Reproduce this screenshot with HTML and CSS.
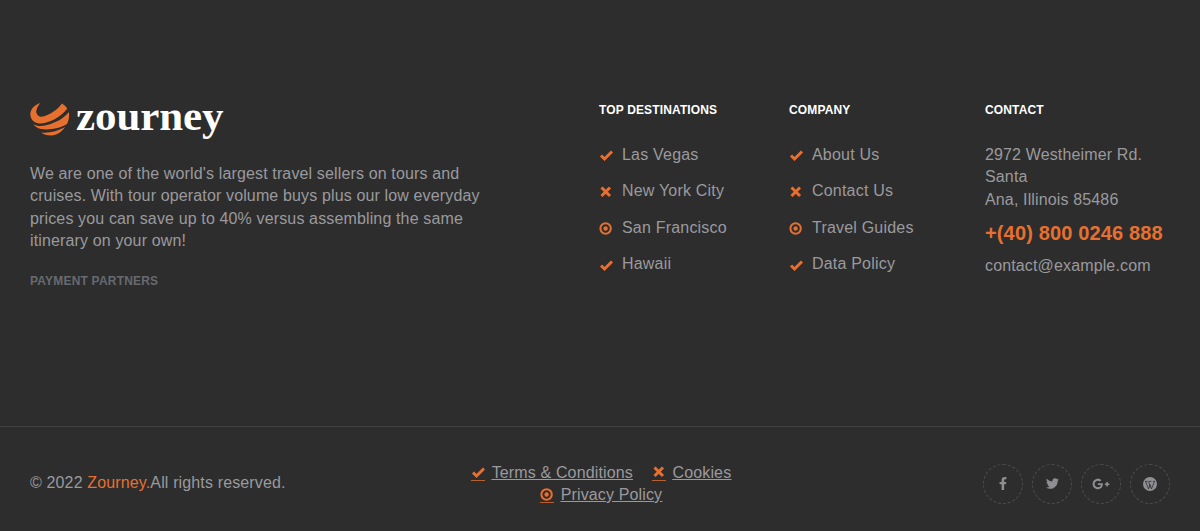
FILE: index.html
```html
<!DOCTYPE html>
<html lang="en">
<head>
<meta charset="utf-8">
<title>Zourney footer</title>
<link rel="stylesheet" href="styles.css">
</head>
<body>
<svg class="defs" width="0" height="0" aria-hidden="true">
  <symbol id="i-check" viewBox="0 0 14 14"><path d="M2 7.500 5.500 11 13 3.500" fill="none" stroke="currentColor" stroke-width="3"/></symbol>
  <symbol id="i-x" viewBox="0 0 14 14"><path d="M2.500 2.500 11 11M11 2.500 2.500 11" fill="none" stroke="currentColor" stroke-width="3"/></symbol>
  <symbol id="i-dot" viewBox="0 0 14 14"><circle cx="6.600" cy="7.500" r="5.200" fill="none" stroke="currentColor" stroke-width="2"/><circle cx="6.600" cy="7.500" r="2.200" fill="currentColor"/></symbol>
</svg>
<footer class="footer">
  <div class="top">
    <section class="about">
      <div class="logo">
        <svg class="logo-mark" viewBox="0 0 40 34" aria-hidden="true">
          <path d="M10 1C5 3 1.500 6 .5 10.500C-.5 16 3 21 9 21.500C18 22 31 15 37 7C37.500 6 35 3.500 32 1.500C28 7 20 13 13 14.500C8 15.500 5.500 11 6.500 8C7 5 9 3 10 1Z" fill="#e8702f"/>
          <path d="M39 10C39.500 15 38.500 19 37 22C30 26 20 28.500 11 27C7 26 5 24.500 3 22C7 24.500 12 24.500 17 23C25 21 33 17 39 10Z" fill="#e8702f"/>
          <path d="M35 25C32 30 27 33 21 33.500C17 33.500 13.500 32.500 11 30.500C19 31.500 28 29 35 25Z" fill="#e8702f"/>
        </svg>
        <span class="logo-text">zourney</span>
      </div>
      <p class="about-text">We are one of the world's largest travel sellers on tours and cruises. With tour operator volume buys plus our low everyday prices you can save up to 40% versus assembling the same itinerary on your own!</p>
      <h5 class="partners">Payment Partners</h5>
    </section>
    <section class="col">
      <h4 class="col-title">Top Destinations</h4>
      <ul class="links">
        <li><svg class="ico"><use href="#i-check"/></svg>Las Vegas</li>
        <li><svg class="ico"><use href="#i-x"/></svg>New York City</li>
        <li><svg class="ico"><use href="#i-dot"/></svg>San Francisco</li>
        <li><svg class="ico"><use href="#i-check"/></svg>Hawaii</li>
      </ul>
    </section>
    <section class="col">
      <h4 class="col-title">Company</h4>
      <ul class="links">
        <li><svg class="ico"><use href="#i-check"/></svg>About Us</li>
        <li><svg class="ico"><use href="#i-x"/></svg>Contact Us</li>
        <li><svg class="ico"><use href="#i-dot"/></svg>Travel Guides</li>
        <li><svg class="ico"><use href="#i-check"/></svg>Data Policy</li>
      </ul>
    </section>
    <section class="col">
      <h4 class="col-title">Contact</h4>
      <address class="address">2972 Westheimer Rd. Santa<br>Ana, Illinois 85486</address>
      <div class="phone">+(40) 800 0246 888</div>
      <div class="email">contact@example.com</div>
    </section>
  </div>
  <div class="bottom">
    <div class="copy">© 2022 <span class="accent">Zourney.</span>All rights reserved.</div>
    <div class="legal">
      <a class="legal-link" href="#"><span class="ico-wrap"><svg class="ico-sm"><use href="#i-check"/></svg></span><span class="legal-text">Terms &amp; Conditions</span></a>
      <a class="legal-link" href="#"><span class="ico-wrap"><svg class="ico-sm"><use href="#i-x"/></svg></span><span class="legal-text">Cookies</span></a>
      <a class="legal-link" href="#"><span class="ico-wrap"><svg class="ico-sm"><use href="#i-dot"/></svg></span><span class="legal-text">Privacy Policy</span></a>
    </div>
    <div class="social">
      <a class="soc" href="#"><svg viewBox="0 0 320 512" class="soc-f"><path fill="currentColor" d="M279.14 288l14.22-92.66h-88.91v-60.13c0-25.35 12.42-50.06 52.24-50.06h40.42V6.26S260.43 0 225.36 0c-73.22 0-121.08 44.38-121.08 124.72v70.62H22.89V288h81.39v224h100.17V288z"/></svg></a>
      <a class="soc" href="#"><svg viewBox="0 0 512 512" class="soc-t"><path fill="currentColor" d="M459.37 151.716c.325 4.548.325 9.097.325 13.645 0 138.72-105.583 298.558-298.558 298.558-59.452 0-114.68-17.219-161.137-47.106 8.447.974 16.568 1.299 25.34 1.299 49.055 0 94.213-16.568 130.274-44.832-46.132-.975-84.792-31.188-98.112-72.772 6.498.974 12.995 1.624 19.818 1.624 9.421 0 18.843-1.3 27.614-3.573-48.081-9.747-84.143-51.98-84.143-102.985v-1.299c13.969 7.797 30.214 12.67 47.431 13.319-28.264-18.843-46.781-51.005-46.781-87.391 0-19.492 5.197-37.36 14.294-52.954 51.655 63.675 129.3 105.258 216.365 109.807-1.624-7.797-2.599-15.918-2.599-24.04 0-57.828 46.782-104.934 104.934-104.934 30.213 0 57.502 12.67 76.67 33.137 23.715-4.548 46.456-13.32 66.599-25.34-7.798 24.366-24.366 44.833-46.132 57.827 21.117-2.273 41.584-8.122 60.426-16.243-14.292 20.791-32.161 39.308-52.628 54.253z"/></svg></a>
      <a class="soc" href="#"><svg viewBox="0 0 640 512" class="soc-g"><path fill="currentColor" d="M386.061 228.496c1.834 9.692 3.143 19.384 3.143 31.956C389.204 370.205 315.599 448 204.8 448c-106.084 0-192-85.915-192-192s85.916-192 192-192c51.864 0 95.083 18.859 128.611 50.292l-52.126 50.03c-14.145-13.621-39.028-29.599-76.485-29.599-65.484 0-118.92 54.221-118.92 121.277 0 67.056 53.436 121.277 118.92 121.277 75.961 0 104.513-54.745 108.965-82.773H204.8v-66.009h181.261zm185.406 6.437V179.2h-56.001v55.733h-55.733v56.001h55.733v55.733h56.001v-55.733H627.2v-56.001h-55.733z"/></svg></a>
      <a class="soc" href="#"><svg viewBox="0 0 24 24" class="soc-w"><circle cx="12" cy="12" r="12" fill="currentColor"/><path d="M4.500 8 9.500 20.500 12 13 14.500 20.500 19.500 8M3.500 7.500H8M10 7.500H14.500M17 7.500H20.500M9.500 8 13 18" fill="none" stroke="#2d2d2d" stroke-width="1.300"/></svg></a>
    </div>
  </div>
</footer>
</body>
</html>
```

FILE: styles.css
```css
* { box-sizing: border-box; }
html, body { margin: 0; padding: 0; }
body {
  background: #2d2d2d;
  font-family: "Liberation Sans", Arial, sans-serif;
  font-size: 16px;
  line-height: 22.4px;
  letter-spacing: 0.14px;
  color: #9a9a9e;
  height: 531px;
  overflow: hidden;
}
.defs { position: absolute; }
.footer { height: 531px; display: flex; flex-direction: column; }
.top {
  height: 427px;
  padding: 101px 30px 0;
  display: grid;
  grid-template-columns: 569px 190px 196px 1fr;
  border-bottom: 1px solid #424242;
}
.logo { display: flex; align-items: center; gap: 6px; height: 36px; }
.logo-mark { width: 40px; height: 34px; flex: none; }
.logo-text {
  font-family: "Liberation Serif", serif;
  font-weight: 700;
  font-size: 43px;
  line-height: 36px;
  color: #fff;
  letter-spacing: -0.1px;
  margin-bottom: 6px;
}
.about-text { margin: 26px 0 0; width: 460px; }
.partners {
  margin: 20px 0 0;
  font-size: 12px;
  line-height: 16px;
  font-weight: 700;
  text-transform: uppercase;
  letter-spacing: 0.2px;
  color: #666a70;
}
.col-title {
  margin: 0;
  font-size: 12px;
  line-height: 18px;
  font-weight: 700;
  text-transform: uppercase;
  color: #fff;
}
.links { list-style: none; margin: 25px 0 0; padding: 0; display: flex; flex-direction: column; gap: 14.1px; letter-spacing: 0.2px; }
.links li { display: flex; align-items: center; gap: 9px; height: 22.4px; }
.ico { width: 14px; height: 14px; flex: none; color: #e8702f; }
.ico-wrap { display: inline-block; width: 14px; height: 16px; margin-right: 7px; border-bottom: 1px solid #b85f30; vertical-align: -3px; }
.ico-sm { display: block; width: 14px; height: 14px; color: #e8702f; }
.address { margin: 25px 0 0; font-style: normal; width: 175px; }
.phone { margin-top: 9px; font-size: 20px; line-height: 26px; font-weight: 700; color: #e8702f; }
.email { margin-top: 9px; }
.bottom {
  flex: 1;
  padding: 9px 30px 0;
  display: grid;
  grid-template-columns: 1fr 280px 1fr;
  align-items: center;
}
.copy { margin-top: 0; }
.accent { color: #e8702f; }
.legal { text-align: center; line-height: 22px; padding-left: 2px; margin-top: 1px; }
.legal-link { color: #9a9a9e; display: inline-block; margin: 0 7px; }
.legal-text { text-decoration: underline; }
.social { display: flex; justify-content: flex-end; gap: 9px; }
.soc {
  width: 40px;
  height: 40px;
  border: 1px dashed #4d4d4d;
  border-radius: 50%;
  display: flex;
  align-items: center;
  justify-content: center;
  color: #8f8f93;
}
.soc-f { height: 13px; width: 8px; }
.soc-t { height: 13px; width: 13px; }
.soc-g { height: 14px; width: 18px; }
.soc-w { height: 14px; width: 14px; }
```
